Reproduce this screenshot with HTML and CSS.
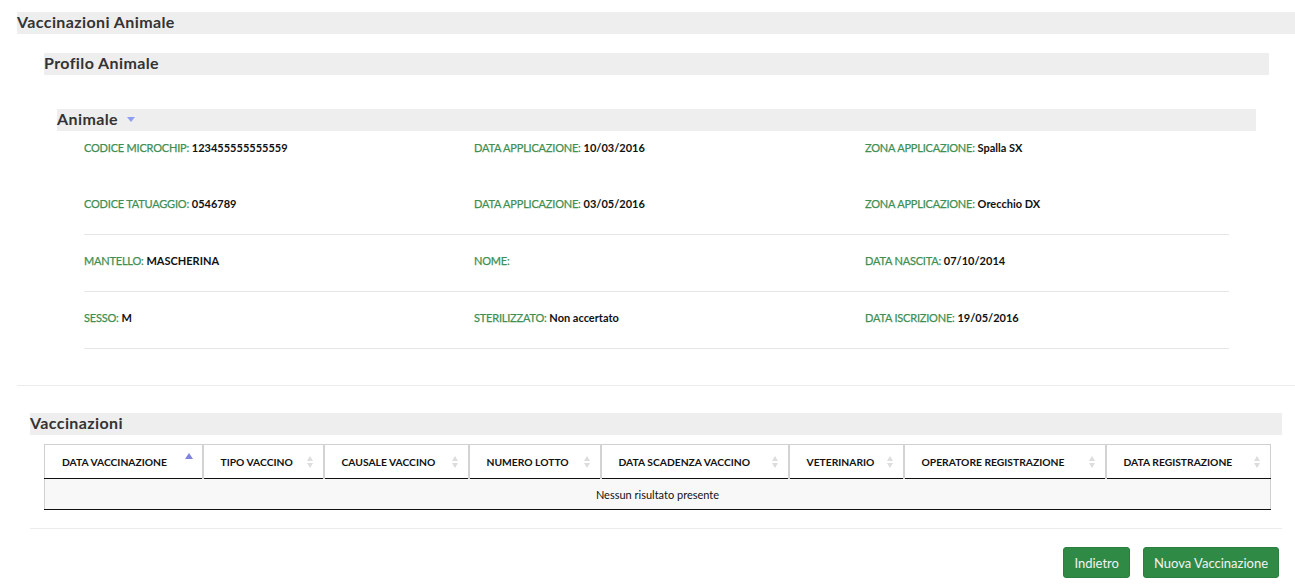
FILE: index.html
```html
<!DOCTYPE html>
<html lang="it">
<head>
<meta charset="utf-8">
<title>Vaccinazioni Animale</title>
<link rel="stylesheet" href="styles.css">
</head>
<body>
<div class="page">
  <h1 class="bar bar-main">Vaccinazioni Animale</h1>

  <section class="profile">
    <h2 class="bar bar-sub">Profilo Animale</h2>

    <section class="animal">
      <h3 class="bar bar-animal">Animale <span class="caret"></span></h3>

      <div class="fields">
        <div class="frow frow-first">
          <div class="field"><span class="lbl">CODICE MICROCHIP:</span> <span class="val">123455555555559</span></div>
          <div class="field"><span class="lbl">DATA APPLICAZIONE:</span> <span class="val">10/03/2016</span></div>
          <div class="field"><span class="lbl">ZONA APPLICAZIONE:</span> <span class="val">Spalla SX</span></div>
        </div>
        <div class="frow frow-second">
          <div class="field"><span class="lbl">CODICE TATUAGGIO:</span> <span class="val">0546789</span></div>
          <div class="field"><span class="lbl">DATA APPLICAZIONE:</span> <span class="val">03/05/2016</span></div>
          <div class="field"><span class="lbl">ZONA APPLICAZIONE:</span> <span class="val">Orecchio DX</span></div>
        </div>
        <div class="frow">
          <div class="field"><span class="lbl">MANTELLO:</span> <span class="val">MASCHERINA</span></div>
          <div class="field"><span class="lbl">NOME:</span> <span class="val"></span></div>
          <div class="field"><span class="lbl">DATA NASCITA:</span> <span class="val">07/10/2014</span></div>
        </div>
        <div class="frow">
          <div class="field"><span class="lbl">SESSO:</span> <span class="val">M</span></div>
          <div class="field"><span class="lbl">STERILIZZATO:</span> <span class="val">Non accertato</span></div>
          <div class="field"><span class="lbl">DATA ISCRIZIONE:</span> <span class="val">19/05/2016</span></div>
        </div>
      </div>
    </section>
  </section>

  <hr class="sep-main">

  <section class="vacc">
    <h2 class="bar bar-vacc">Vaccinazioni</h2>

    <table class="grid">
      <colgroup>
        <col class="c1">
        <col class="c2">
        <col class="c3">
        <col class="c4">
        <col class="c5">
        <col class="c6">
        <col class="c7">
        <col class="c8">
      </colgroup>
      <thead>
        <tr>
          <th>DATA VACCINAZIONE<span class="sort sort-asc"></span></th>
          <th>TIPO VACCINO<span class="sort sort-both"></span></th>
          <th>CAUSALE VACCINO<span class="sort sort-both"></span></th>
          <th>NUMERO LOTTO<span class="sort sort-both"></span></th>
          <th>DATA SCADENZA VACCINO<span class="sort sort-both"></span></th>
          <th>VETERINARIO<span class="sort sort-both"></span></th>
          <th>OPERATORE REGISTRAZIONE<span class="sort sort-both"></span></th>
          <th>DATA REGISTRAZIONE<span class="sort sort-both"></span></th>
        </tr>
      </thead>
      <tbody>
        <tr>
          <td colspan="8" class="empty">Nessun risultato presente</td>
        </tr>
      </tbody>
    </table>

    <hr class="sep-vacc">

    <div class="actions">
      <button class="btn" type="button">Indietro</button>
      <button class="btn" type="button">Nuova Vaccinazione</button>
    </div>
  </section>
</div>
</body>
</html>
```

FILE: styles.css
```css
* { box-sizing: border-box; }

html, body {
  margin: 0;
  padding: 0;
  background: #fff;
}

body {
  font-family: Lato, "Noto Sans", "Liberation Sans", sans-serif;
  color: #111;
  font-size: 11px;
}

.page {
  padding: 12px 0 0 17px;
}

.bar {
  margin: 0;
  background: #eeeeee;
  color: #333;
  font-weight: 700;
  font-size: 16px;
  letter-spacing: 0.4px;
  height: 22px;
  line-height: 19px;
}

.profile {
  margin: 19px 26px 0 27px;
}

.animal {
  margin: 34px 13px 0 13px;
}

.caret {
  display: inline-block;
  width: 0;
  height: 0;
  margin-left: 5px;
  vertical-align: middle;
  position: relative;
  top: -1px;
  border-left: 4px solid transparent;
  border-right: 4px solid transparent;
  border-top: 5px solid #8f9df0;
}

.fields {
  margin: 0 27px;
}

.frow {
  display: grid;
  grid-template-columns: 390px 391px 1fr;
  padding: 19px 0 23px;
  border-bottom: 1px solid #e6e6e6;
  line-height: 14px;
}

.frow-first {
  padding: 10px 0 23px;
  border-bottom: 0;
}

.frow-second {
  padding: 19px 0 23px;
}

.field {
  white-space: nowrap;
}

.lbl {
  color: #3f8f52;
  font-weight: 400;
  letter-spacing: -0.2px;
  -webkit-text-stroke: 0.25px #3f8f52;
}

.val { color: #111; font-weight: 700; }

.sep-main {
  margin: 36px 0 0;
  border: 0;
  border-top: 1px solid #ececec;
  height: 0;
}

.vacc {
  margin: 27px 13px 0 13px;
}

.grid {
  margin: 9px 0 0 14px;
  width: 1226px;
  border-collapse: collapse;
  table-layout: fixed;
  border-left: 1px solid #d0d0d0;
  border-right: 1px solid #d0d0d0;
}

.c1 { width: 158px; }
.c2 { width: 121px; }
.c3 { width: 145px; }
.c4 { width: 132px; }
.c5 { width: 188px; }
.c6 { width: 115px; }
.c7 { width: 202px; }
.c8 { width: 165px; }

.grid th {
  position: relative;
  height: 34px;
  padding: 0 0 0 17px;
  text-align: left;
  font-weight: 700;
  font-size: 10.3px;
  color: #111;
  border-top: 1px solid #d0d0d0;
  border-right: 2px solid #d3d3d3;
  border-bottom: 1px solid #111;
  white-space: nowrap;
}

.grid th:last-child { border-right: 0; }

.sort {
  position: absolute;
  right: 9px;
  top: 50%;
  width: 7px;
}

.sort-asc {
  margin-top: -9px;
  height: 0;
  border-left: 4px solid transparent;
  border-right: 4px solid transparent;
  border-bottom: 6px solid #7f84e0;
}

.sort-both::before,
.sort-both::after {
  content: "";
  position: absolute;
  left: 0;
  width: 0;
  height: 0;
  border-left: 3.5px solid transparent;
  border-right: 3.5px solid transparent;
}

.sort-both::before {
  top: -6px;
  border-bottom: 5px solid #dddddd;
}

.sort-both::after {
  top: 1px;
  border-top: 5px solid #dddddd;
}

.grid td.empty {
  height: 31px;
  background: #f8f8f8;
  text-align: center;
  color: #111;
  font-size: 11px;
  border-bottom: 1px solid #111;
}

.sep-vacc {
  margin: 18px 0 0;
  border: 0;
  border-top: 1px solid #ececec;
  height: 0;
}

.actions {
  display: flex;
  justify-content: flex-end;
  gap: 13px;
  margin: 18px 3px 0 0;
}

.btn {
  font-family: Lato, "Noto Sans", "Liberation Sans", sans-serif;
  font-size: 13px;
  color: #f2f2f2;
  background: #2f8a46;
  border: 1px solid #2a7e40;
  border-radius: 3px;
  height: 31px;
  padding: 0 10px;
  cursor: pointer;
}
```
